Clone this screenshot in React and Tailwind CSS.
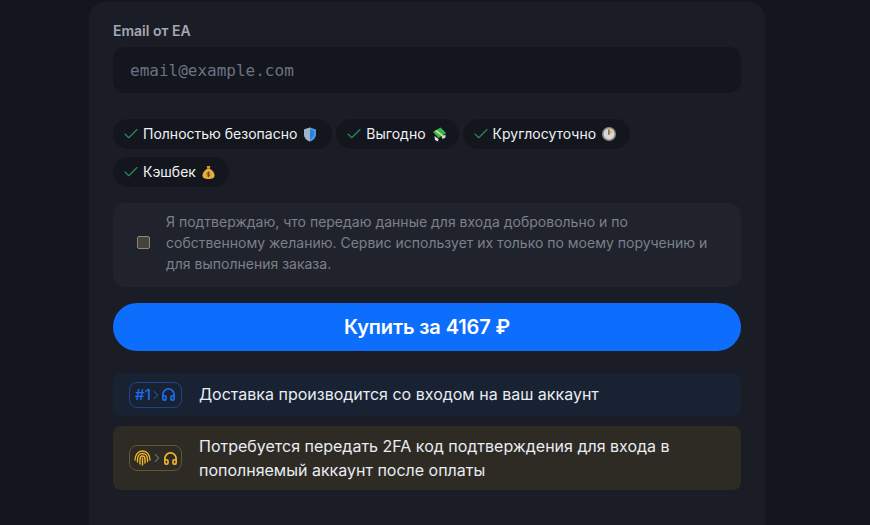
import React from "react";
import { Check, Headphones, ChevronRight } from "lucide-react";

// Эмодзи в стиле оригинала
function ShieldIcon() {
  return (
    <svg width="14" height="15" viewBox="0 0 14 15">
      <path d="M7 0.5 L13 2.5 V7 C13 11 10 13.5 7 14.5 C4 13.5 1 11 1 7 V2.5 Z" fill="#4a9be8" />
      <path d="M7 0.5 L1 2.5 V7 C1 11 4 13.5 7 14.5 Z" fill="#9fb4c8" />
      <path d="M7 2.5 L11 4 V7 C11 9.5 9.5 11.3 7 12.4 Z" fill="#2f7fd6" />
    </svg>
  );
}

function MoneyIcon() {
  return (
    <svg width="15" height="15" viewBox="0 0 14 15">
      <path d="M0.5 5 L8 0.5 L13.5 6 L6 11 Z" fill="#2fb55f" />
      <path d="M3 3.5 L10.5 9" stroke="#f3d35b" strokeWidth="1.6" />
      <path d="M2 9 L6 12 L5.5 14.5 L2.5 13 Z" fill="#dfe5e8" />
      <path d="M9 9.5 L13 7.5 L13 10.5 L10 12 Z" fill="#cfd8dc" />
    </svg>
  );
}

function ClockIcon() {
  return (
    <svg width="14" height="14" viewBox="0 0 14 14">
      <circle cx="7" cy="7" r="7" fill="#8b8d92" />
      <circle cx="7" cy="7" r="5.4" fill="#dcd9d2" />
      <path d="M7 2.5 V7 H7.5" stroke="#5a4a2a" strokeWidth="1.4" fill="none" />
      <path d="M7.5 2.5 L10.5 5.5 L7.5 7 Z" fill="#e0b040" />
    </svg>
  );
}

function BagIcon() {
  return (
    <svg width="13" height="15" viewBox="0 0 14 15">
      <path d="M5 0.5 H9 L8.3 3.5 H5.7 Z" fill="#d19a2e" />
      <path d="M5.5 3.5 H8.5 C11.5 5.5 13.5 8 13.5 10.5 C13.5 13.5 11 14.5 7 14.5 C3 14.5 0.5 13.5 0.5 10.5 C0.5 8 2.5 5.5 5.5 3.5 Z" fill="#e3ae3c" />
      <path d="M7 6.5 V12.5 M8.6 7.8 H6.2 C5.2 7.8 5.2 9.5 6.2 9.5 H7.8 C8.8 9.5 8.8 11.2 7.8 11.2 H5.4" stroke="#6b4513" strokeWidth="1" fill="none" />
    </svg>
  );
}

// Отпечаток пальца, дуги как на бейдже
function PrintIcon() {
  return (
    <svg width="17" height="16" viewBox="0 0 17 16" fill="none" stroke="currentColor" strokeWidth="1.4" strokeLinecap="round">
      <path d="M1 10 C1 5 4 1 8.5 1 C13 1 16 5 16 10" />
      <path d="M3.5 12 V9.5 C3.5 6 5.5 3.5 8.5 3.5 C11.5 3.5 13.5 6 13.5 9.5 V11.5" />
      <path d="M6 14 V9.5 C6 7.5 7 6 8.5 6 C10 6 11 7.5 11 9.5 V13" />
      <path d="M8.5 8.5 V15" />
    </svg>
  );
}

const perks = [
  { text: "Полностью безопасно", icon: <ShieldIcon />, box: "w-[18px]" },
  { text: "Выгодно", icon: <MoneyIcon />, box: "w-[16px]" },
  { text: "Круглосуточно", icon: <ClockIcon />, box: "w-[17px]" },
  { text: "Кэшбек", icon: <BagIcon />, box: "w-[16px]" },
];

export default function App() {
  return (
    <div className="h-[525px] overflow-hidden bg-[#13161d] pt-[2px] pl-[89px] font-['Inter',sans-serif]">
      <div className="h-[600px] w-[676px] rounded-t-2xl bg-[#1a1d25] px-6 pt-[20px]">
        {/* Email */}
        <div className="text-sm leading-[18px] font-semibold text-[#a3a8b3]">Email от EA</div>
        <input
          placeholder="email@example.com"
          className="mt-[7px] block h-[46px] w-full rounded-xl bg-[#13161d] pr-4 pl-[17px] font-['DejaVu_Sans_Mono',monospace] text-[16px] text-white outline-none placeholder:text-[#6b7280]"
        />

        {/* Плашки */}
        <div className="mt-[26px] flex flex-wrap gap-x-[4px] gap-y-2">
          {perks.map((p) => (
            <div key={p.text} className="flex h-[30px] items-center rounded-full bg-[#13161d] pr-[11px] pl-[9px] text-sm text-[#f0f2f5]">
              <Check size={18} strokeWidth={1.5} className="mr-[3px] text-[#2b8a5e]" />
              <span>{p.text}</span>
              <span className={`ml-[6px] flex h-[15px] items-center ${p.box}`}>{p.icon}</span>
            </div>
          ))}
        </div>

        {/* Согласие */}
        <div className="mt-4 flex h-[84px] items-center rounded-xl bg-[#20232b] pr-4 pb-[6px] pl-6">
          <div className="h-[13px] w-[13px] shrink-0 rounded-[2px] border border-[#8f8a78] bg-[#45433a]" />
          <p className="ml-4 text-sm leading-[21px] text-[#7a808c]">
            Я подтверждаю, что передаю данные для входа добровольно и по собственному желанию. Сервис использует их только по моему поручению и для выполнения заказа.
          </p>
        </div>

        <button className="mt-4 block h-12 w-full rounded-full bg-[#0d6efd] text-xl font-semibold tracking-[-0.12px] text-white">
          Купить за 4167 ₽
        </button>

        {/* Инфо */}
        <div className="mt-[22px] flex h-[43px] items-center rounded-lg bg-[#182233] px-4 leading-6 text-[#e9edf2]">
          <div className="flex h-[26px] w-[53px] shrink-0 items-center justify-center rounded-lg border border-[#1d4487] text-[#1a6eef]">
            <span className="text-[15px] leading-none font-medium">#1</span>
            <ChevronRight size={14} strokeWidth={2} className="-mx-[2px] text-[#25477f]" />
            <Headphones size={15} strokeWidth={2.75} />
          </div>
          <span className="ml-[17px] -translate-y-px text-base">Доставка производится со входом на ваш аккаунт</span>
        </div>

        <div className="mt-[10px] flex h-[64px] items-center rounded-lg bg-[#2e2b25] px-4 text-[#e9edf2]">
          <div className="flex h-[26px] w-[53px] shrink-0 items-center justify-center rounded-lg border border-[#665433] text-[#f0b429]">
            <PrintIcon />
            <ChevronRight size={14} strokeWidth={2} className="-mx-[1px] text-[#6b6659]" />
            <Headphones size={15} strokeWidth={2.75} />
          </div>
          <span className="ml-[17px] text-base leading-[24px]">
            Потребуется передать 2FA код подтверждения для входа в пополняемый аккаунт после оплаты
          </span>
        </div>
      </div>
    </div>
  );
}
